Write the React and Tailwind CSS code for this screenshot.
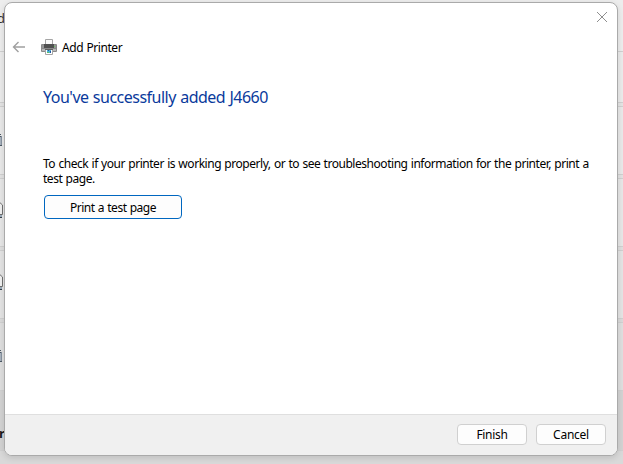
import React from "react";

const rows = [
  { height: "h-[51px]", tone: "bg-[#ededed]", item: "word" },
  { height: "h-[51px]", tone: "bg-[#ebebeb]", item: null },
  { height: "h-1", tone: "bg-[#e4e4e4]", item: null },
  { height: "h-[68px]", tone: "bg-[#e9e9e9]", item: "device" },
  { height: "h-1", tone: "bg-[#e2e2e2]", item: null },
  { height: "h-[68px]", tone: "bg-[#e7e7e7]", item: "printer" },
  { height: "h-1", tone: "bg-[#dfdfdf]", item: null },
  { height: "h-[68px]", tone: "bg-[#e4e4e4]", item: "printer" },
  { height: "h-1", tone: "bg-[#dadada]", item: null },
  { height: "h-[68px]", tone: "bg-[#dfdfdf]", item: "device" },
  { height: "h-[60px]", tone: "bg-[#d3d3d3]", item: "heading" },
  { height: "h-[14px]", tone: "bg-[#d9d9d9]", item: null },
];

function RowItem({ kind }) {
  if (kind === "word") {
    return <span className="-ml-[3px] mt-[9px] block text-[13px] leading-[18px] text-[#333]">d</span>;
  }
  if (kind === "heading") {
    return <span className="-ml-px mt-[33px] block text-[13px] font-bold leading-[18px] text-[#1b1b1b]">r</span>;
  }
  if (kind === "device") {
    return (
      <svg className="mt-[27px] block" width="4" height="12" shapeRendering="crispEdges">
        <rect width="2" height="10" y="2" fill="#a8b2bd" />
        <path d="M0 .5h1M0 2.5h2M0 11.5h2" stroke="#4c5864" />
        <path d="M1.5 2v9" stroke="#8792a0" />
      </svg>
    );
  }
  if (kind === "printer") {
    return (
      <svg className="mt-[23px] block" width="4" height="17">
        <path d="M0 .7 2.500 3v9.500H0" fill="#f1f1f1" stroke="#707070" />
        <path d="M0 14h2" stroke="#9aaab9" strokeWidth="2" />
        <path d="M0 15.500h2" stroke="#38434d" />
      </svg>
    );
  }
  return null;
}

function PrinterIcon() {
  return (
    <svg width="16" height="16" viewBox="0 0 16 16">
      <path d="M4.500.5h7v6h-7z" fill="#fafafa" stroke="#a5a5a5" />
      <rect x="0" y="5" width="16" height="8" rx="1" fill="#8a8a8a" />
      <path d="M1 6h2v3H1zM13 6h2v3h-2z" fill="#969696" />
      <path d="M3 5h10v4H3z" fill="#505050" />
      <path d="M1 10h14v2H1z" fill="#b8b8b8" />
      <path d="M13 7h1v1h-1z" fill="#62d35b" />
      <path d="M4.500 10.500h7v5h-7z" fill="#fff" stroke="#a5a5a5" />
      <path d="M4 10h8v1H4z" fill="#606060" />
      <path d="M6 11h4v3H6z" fill="#4bb3da" />
      <path d="M7 11h1v1H7zM9 12h1v2H9z" fill="#2454a0" />
      <path d="M6 13h2v1H6z" fill="#5bbd69" />
    </svg>
  );
}

export default function App() {
  return (
    <main className="relative h-[464px] w-[623px] overflow-hidden bg-[#e4e4e4] font-['Noto_Sans',sans-serif] text-[12px] text-black">
      <div>
        {rows.map((row, i) => (
          <div key={i} className={`${row.height} ${row.tone} overflow-hidden ${i ? "border-t border-[#d0d0d0]" : ""}`}>
            <RowItem kind={row.item} />
          </div>
        ))}
      </div>

      <section className="absolute left-1 top-0.5 flex h-[454px] w-[614px] flex-col overflow-hidden rounded-lg border border-[#aaa] bg-white shadow-[0_2px_6px_rgba(0,0,0,0.12)]">
        <header className="h-[60px] shrink-0">
          <div className="flex h-7 justify-end pr-[9px] pt-2">
            <button aria-label="Close" className="h-3 w-3">
              <svg width="12" height="12" viewBox="0 0 12 12" fill="none" stroke="#8e8e8e">
                <path d="m1 1 10 10M11 1 1 11" />
              </svg>
            </button>
          </div>
          <div className="flex h-8 items-center pl-[7px]">
            <svg width="14" height="12" viewBox="0 0 14 12" fill="none" stroke="#a0a0a0" strokeWidth="1.4">
              <path d="M13 6H1.500M6.500 1l-5 5 5 5" />
            </svg>
            <span className="ml-[15px]"><PrinterIcon /></span>
            <h1 className="ml-[5px] whitespace-nowrap pt-0.5 text-[12px] leading-4 tracking-[-0.43px] [word-spacing:0.6px]">Add Printer</h1>
          </div>
        </header>

        <div className="flex flex-1 flex-col items-start pl-[38px] pt-[22px]">
          <h2 className="whitespace-nowrap text-[16px] leading-6 tracking-[-0.5px] text-[#0a3a9c] [word-spacing:0.6px]">You've successfully added J4660</h2>
          <div className="mt-[47px] whitespace-nowrap text-[12px] leading-[15px] tracking-[-0.46px] [word-spacing:0.6px]">
            <p>To check if your printer is working properly, or to see troubleshooting information for the printer, print a</p>
            <p>test page.</p>
          </div>
          <button className="ml-px mt-[9px] flex h-6 w-[138px] items-center justify-center rounded border border-[#0067c0] bg-[#fdfdfd] pt-px tracking-[-0.5px] [word-spacing:0.6px]">
            Print a test page
          </button>
        </div>

        <footer className="flex h-[41px] shrink-0 items-start justify-end gap-[9px] border-t border-[#dfdfdf] bg-[#f0f0f0] pr-[11px] pt-[9px]">
          <button className="flex h-[21px] w-[70px] items-center justify-center rounded border border-[#d0d0d0] bg-[#fdfdfd] tracking-[-0.3px]">Finish</button>
          <button className="flex h-[21px] w-[70px] items-center justify-center rounded border border-[#d0d0d0] bg-[#fdfdfd] tracking-[-0.25px]">Cancel</button>
        </footer>
      </section>
    </main>
  );
}
